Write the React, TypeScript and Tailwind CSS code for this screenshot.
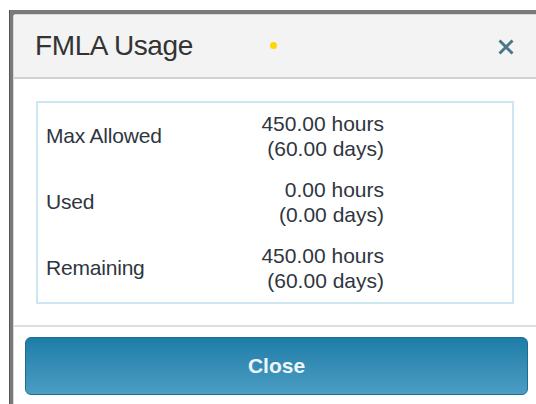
import React from "react";

const rows = [
  { label: "Max Allowed", hours: "450.00 hours", days: "(60.00 days)" },
  { label: "Used", hours: "0.00 hours", days: "(0.00 days)" },
  { label: "Remaining", hours: "450.00 hours", days: "(60.00 days)" },
];

export default function App() {
  return (
    <div
      className="w-[536px] h-[404px] overflow-hidden bg-white pl-[9px] pt-[10px] flex"
      style={{ fontFamily: '"Liberation Sans", Arial, sans-serif' }}
    >
      {/* dimmed page frame behind the dialog */}
      <div className="flex-1 flex bg-[#7a7a7a] border-l border-[#555] pl-[3px] pt-[4px]">
        <div className="flex-1 flex flex-col bg-white rounded-tl-[3px] border-l border-t border-[#d8d8d8] w-[530px]">
          {/* header */}
          <div className="h-[64px] shrink-0 bg-[#f3f3f3] border-b-2 border-[#d2d2d2] flex items-center pl-[21px] pr-[20px] relative">
            <span className="text-[28px] text-[#333] tracking-[-0.4px] leading-none">FMLA Usage</span>
            <span className="absolute left-[256px] top-[27px] w-[7px] h-[7px] rounded-full bg-[#ffd800]" />
            <svg
              className="absolute left-[483px] top-[23px]"
              width="18"
              height="18"
              viewBox="0 0 18 18"
            >
              <path
                d="M2.5 2.5 L15.5 15.5 M15.5 2.5 L2.5 15.5"
                stroke="#4b7688"
                strokeWidth="3"
                strokeLinecap="butt"
              />
            </svg>
          </div>

          {/* body */}
          <div className="pt-[22px] pl-[22px] pb-[21px] shrink-0">
            <div className="w-[478px] border-2 border-[#cde6f1] pb-[1px]">
              {rows.map((r) => (
                <div key={r.label} className="h-[66px] flex items-center">
                  <div className="w-[200px] pl-[8px] text-[21px] text-[#2f3640] tracking-[-0.2px]">{r.label}</div>
                  <div className="w-[146px] text-right text-[21px] leading-[25px] text-[#2f3640]">
                    <div>{r.hours}</div>
                    <div>{r.days}</div>
                  </div>
                </div>
              ))}
            </div>
          </div>

          {/* footer */}
          <div className="border-t-2 border-[#dedede] pt-[10px] pl-[11px] flex-1">
            <button className="w-[503px] h-[58px] rounded-[6px] border border-[#1d6d92] bg-gradient-to-b from-[#1c7da7] to-[#4b9dc4] text-[21px] font-bold text-[#eef6fa] flex items-center justify-center">
              Close
            </button>
          </div>
        </div>
      </div>
    </div>
  );
}
